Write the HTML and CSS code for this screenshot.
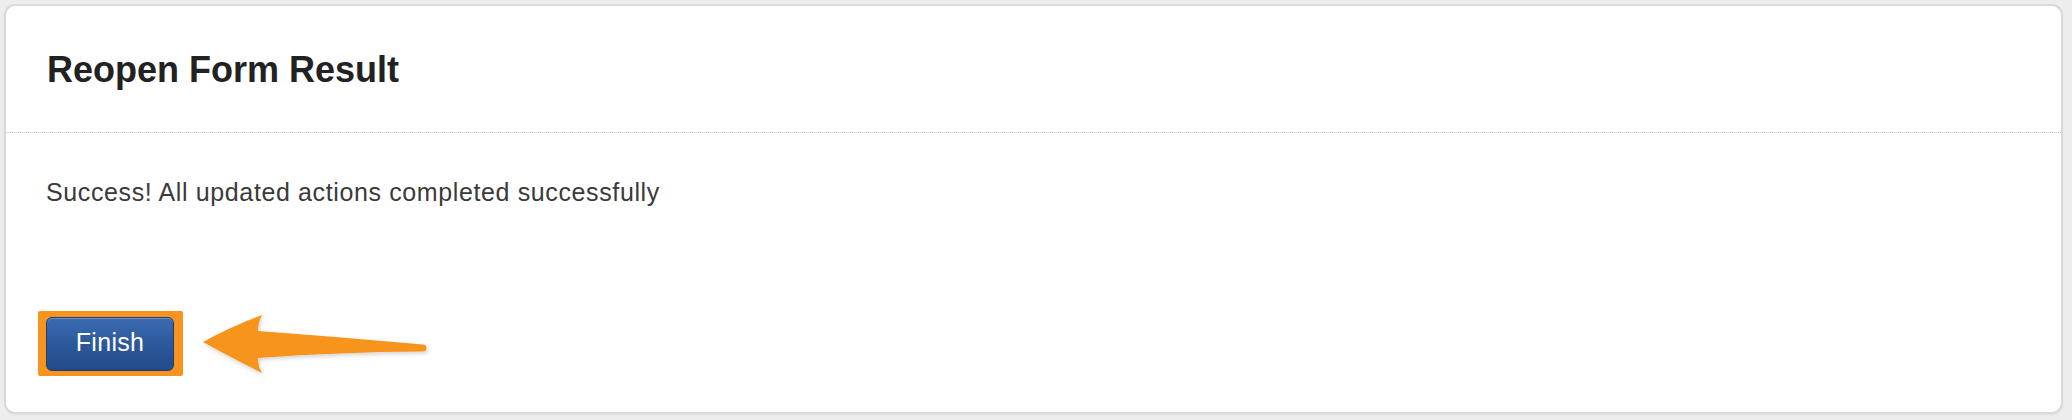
FILE: index.html
```html
<!DOCTYPE html>
<html>
<head>
<meta charset="utf-8">
<link rel="stylesheet" href="styles.css">
</head>
<body>
<div class="card">
  <div class="card-header">
    <h1 class="title">Reopen Form Result</h1>
  </div>
  <div class="card-body">
    <p class="message">Success! All updated actions completed successfully</p>
    <div class="footer">
      <div class="highlight">
        <button class="btn-finish">Finish</button>
      </div>
      <svg class="arrow" width="232" height="66" viewBox="0 0 232 66">
        <defs>
          <filter id="sh" x="-10%" y="-20%" width="130%" height="160%">
            <feDropShadow dx="1" dy="2" stdDeviation="2" flood-color="#000" flood-opacity="0.18"/>
          </filter>
        </defs>
        <path filter="url(#sh)" fill="#f7941f" d="M3,31 Q30,16 62,4 Q58,12 58,20 Q140,26 223,33.5 A3.5,3.5 0 0 1 223,40.5 Q140,41 58,47 Q58,55 62,62 Q30,46 3,31 Z"/>
      </svg>
    </div>
  </div>
</div>
</body>
</html>
```
FILE: styles.css
```css
html, body {
  margin: 0;
  padding: 0;
}
body {
  background: #ededed;
  padding: 4px 9px 8px 4px;
  font-family: "Liberation Sans", Arial, Helvetica, sans-serif;
}
.card {
  background: #fff;
  border: 2px solid #d9d9d9;
  border-radius: 11px;
  box-shadow: 0 1px 2px rgba(0,0,0,0.05);
}
.card-header {
  padding: 46px 40px 44px 41px;
  border-bottom: 1px dotted #c6c6c6;
}
.title {
  margin: 0;
  font-size: 36px;
  line-height: 36px;
  font-weight: bold;
  color: #222;
}
.card-body {
  padding: 47px 40px 35px 40px;
}
.message {
  margin: 0;
  font-size: 25px;
  line-height: 25px;
  letter-spacing: 0.62px;
  color: #3a3a3a;
}
.footer {
  margin-top: 104px;
  margin-left: -8px;
  display: flex;
  align-items: center;
}
.highlight {
  background: #f7941f;
  padding: 6px 9px 5px 8px;
  border-radius: 2px;
  display: flex;
}
.btn-finish {
  width: 128px;
  height: 54px;
  border: 1px solid #1d3e74;
  border-radius: 6px;
  background: linear-gradient(#3b6cb1, #2a5597 60%, #234b8b);
  box-shadow: inset 0 1px 0 rgba(255,255,255,0.25);
  color: #fff;
  font-family: "Liberation Sans", Arial, Helvetica, sans-serif;
  font-size: 25px;
  letter-spacing: 0.3px;
  line-height: 25px;
  padding: 0 0 3px 0;
}
.arrow {
  margin-left: 17px;
  margin-top: 2px;
}
```
